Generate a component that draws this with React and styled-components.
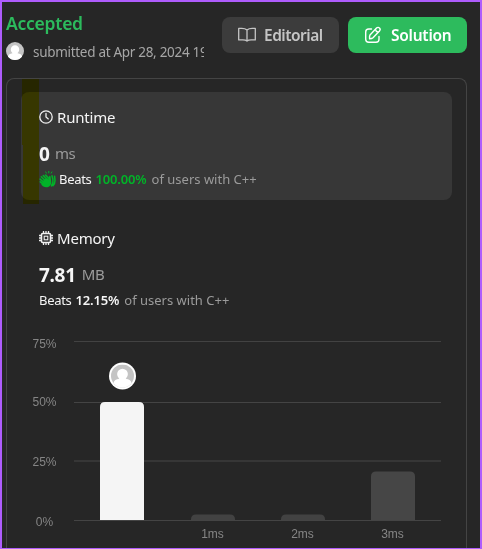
import React from "react";
import styled, { createGlobalStyle } from "styled-components";

const Global = createGlobalStyle`
  *, *::before, *::after { box-sizing: border-box; }
  body { margin: 0; background: #262626; }
`;

const Frame = styled.main`
  width: 482px;
  height: 549px;
  overflow: hidden;
  border: 2px solid #ae5cfc;
  border-bottom-width: 1px;
  background: #262626;
  color: #fff;
  font-family: "Noto Sans", "Open Sans", sans-serif;
  display: flex;
  flex-direction: column;
`;

const Header = styled.header`
  height: 76px;
  flex: none;
  padding: 0 13px 0 4px;
  display: flex;
  justify-content: space-between;
`;

const Status = styled.div`
  width: 198px;
  padding-top: 9px;
`;

const Text = styled.span`
  display: inline-block;
  flex: none;
  white-space: nowrap;
  color: ${(p) => p.$color || "#f5f5f5"};
  font-size: ${(p) => p.$size || 14}px;
  font-weight: ${(p) => p.$weight || 400};
  letter-spacing: ${(p) => p.$track || 0}px;
  line-height: ${(p) => p.$line || 20}px;
  margin-left: ${(p) => p.$gap || 0}px;
  padding-top: ${(p) => p.$drop || 0}px;
  padding-bottom: ${(p) => p.$lift || 0}px;
`;

const Submitted = styled.div`
  display: flex;
  align-items: center;
  height: 20px;
  margin-top: 6px;
  overflow: hidden;
`;

const Actions = styled.div`
  display: flex;
  gap: 9px;
  padding-top: 15px;
`;

const Button = styled.button`
  width: ${(p) => p.$width}px;
  height: 36px;
  border: 0;
  border-radius: 8px;
  padding: 0 0 0 16px;
  display: flex;
  align-items: center;
  font-family: inherit;
  color: ${(p) => p.$ink};
  background: ${(p) => p.$fill};
`;

const Card = styled.section`
  position: relative;
  flex: 1;
  width: 461px;
  margin-left: 4px;
  padding: 13px 14px 0;
  border: 1px solid #444;
  border-bottom: 0;
  border-radius: 8px 8px 0 0;
`;

const Metric = styled.div`
  height: 108px;
  padding: 15px 18px 0;
  border-radius: 8px;
  background: ${(p) => (p.$active ? "#373737" : "transparent")};
  margin-bottom: ${(p) => (p.$active ? 13 : 0)}px;
`;

const Row = styled.div`
  display: flex;
  align-items: center;
  height: ${(p) => p.$height}px;
  margin-top: ${(p) => p.$top || 0}px;
`;

const Highlighter = styled.div`
  position: absolute;
  top: 0;
  left: 15px;
  width: 17px;
  height: 125px;
  background: #ff0;
  mix-blend-mode: multiply;
  clip-path: polygon(0 0, 100% 0, 100% 100%, 1px 100%, 1px 66px, 0 66px);
`;

const Chart = styled.svg`
  display: block;
  margin: 14px 0 0 -14px;
  font-family: "Liberation Sans", Arial, sans-serif;
  font-size: 12px;
`;

const Avatar = styled.svg`
  flex: none;
`;

function Person({ size = 18 }) {
  return (
    <Avatar width={size} height={size} viewBox="0 0 18 18">
      <circle cx="9" cy="9" r="9" fill="#c4c4c4" />
      <path fill="#fff" d="M4.800 7.500a4.200 4.200 0 0 1 8.400 0c0 1.500-.7 2.600-1.600 3.400v.3c2.500.4 4 1.400 4.500 3.200A9 9 0 0 1 9 18a9 9 0 0 1-7.100-3.600c.6-1.800 2-2.800 4.500-3.200v-.3C5.500 10.100 4.800 9 4.800 7.500Z" />
    </Avatar>
  );
}

function Book() {
  return (
    <svg width="18" height="16" viewBox="0 0 18 16" fill="none" stroke="currentColor" strokeWidth="1.300" strokeLinejoin="round">
      <path d="M9 3C7.500 1.700 6 1.400 3.800 1.400H.7v11.500h4.100c1.800 0 3.100.2 4.200 1.200 1.100-1 2.400-1.200 4.200-1.200h4.100V1.400h-3.100C12 1.400 10.500 1.700 9 3Zm0 0v11" />
    </svg>
  );
}

function Compose() {
  return (
    <svg width="18" height="18" viewBox="0 0 18 18" fill="none" stroke="currentColor" strokeWidth="1.400" strokeLinecap="round" strokeLinejoin="round">
      <path d="M7.500 3H4.800C2.500 3 1.700 3.900 1.700 6v7.300c0 2 .8 3 3.100 3H12c2 0 3-1 3-3v-2.800" />
      <path d="m6 8.900 6.500-6.800c1-1 2.200-.9 3 0 .8.8.9 1.900 0 2.900L9 11.800c-.9.900-1.800 1-3.400 1-.2-1.600-.2-2.700.4-3.900ZM11.400 3.300c.3 1.700 1.200 2.600 2.900 2.900" />
    </svg>
  );
}

function Clock() {
  return (
    <svg width="14" height="14" viewBox="0 0 14 14" fill="none" stroke="#f0f0f0" strokeWidth="1.300" strokeLinecap="round">
      <circle cx="7" cy="7" r="6.200" />
      <path d="M7 3.400V7l2.300 1.900" />
    </svg>
  );
}

function Chip() {
  return (
    <svg width="14" height="14" viewBox="0 0 14 14" fill="none" stroke="#f0f0f0" strokeWidth="1.600">
      <rect x="2.500" y="2.500" width="9" height="9" rx="1.200" />
      <rect x="5.200" y="5.200" width="3.600" height="3.600" strokeWidth="1.100" />
      <path strokeWidth="1.300" d="M4.500 0v2M7 0v2M9.500 0v2M4.500 12v2M7 12v2M9.500 12v2M0 4.500h2M0 7h2M0 9.500h2M12 4.500h2M12 7h2M12 9.500h2" />
    </svg>
  );
}

function Clap() {
  return (
    <svg width="17" height="17" viewBox="0 0 17 17" fill="none" stroke="#01b328" strokeLinecap="round" strokeLinejoin="round">
      <path strokeWidth="1" d="m6.700.9.7 1.200M9.800.4v1.500M12.900.9l-.7 1.200" />
      <path strokeWidth="1.600" d="M4.300 4.500 8.500 9M2.300 5.800 7 10.500M1.200 8.100l4.500 4.300M1.300 10.800l3 2.700M6.600 4l3 3.300" />
      <path fill="#01b328" stroke="none" d="m5 8.300 3.400-.9 1.500 1.200V5.400c.2-1 1.500-1 1.700 0l.7 5.600c0 3.300-2.200 5.300-5 5.300-2.200 0-3.800-1-5-2.700Z" />
      <path strokeWidth="1.500" d="m13 4.800.9 3.400c.5 2.600-.1 4.800-1.500 6.700M15.600 5.300l.4 4.100c0 2.300-.7 3.900-2 5.200" />
    </svg>
  );
}

const bars = [
  { x: 93, top: 67, fill: "#f5f5f5" },
  { x: 184, top: 179.500, fill: "#424242", label: "1ms" },
  { x: 274, top: 179.500, fill: "#424242", label: "2ms" },
  { x: 364, top: 136.500, fill: "#464646", label: "3ms" },
];

const ticks = [
  { label: "75%", y: 6, text: 12.500, stroke: "#424242" },
  { label: "50%", y: 67, text: 71, stroke: "#444" },
  { label: "25%", y: 125, text: 131, stroke: "#363636", thick: 2 },
  { label: "0%", y: 185, text: 190.500, stroke: "#444" },
];

function Distribution() {
  return (
    <Chart width="459" height="208" viewBox="0 0 459 208">
      {ticks.map((t) => (
        <g key={t.label}>
          <rect x="67" y={t.y} width="367" height={t.thick || 1} fill={t.stroke} />
          <text x="37.500" y={t.text} textAnchor="middle" fill="#858585">{t.label}</text>
        </g>
      ))}
      {bars.map((b) => (
        <g key={b.x}>
          <path fill={b.fill} d={`M${b.x} 185V${b.top + 5}q0-5 5-5h34q5 0 5 5V185Z`} />
          {b.label && <text x={b.x + 21.500} y="203" textAnchor="middle" fill="#858585">{b.label}</text>}
        </g>
      ))}
      <circle cx="115.500" cy="41" r="13.500" fill="#fff" />
      <g transform="translate(104 29.500)"><Person size={23} /></g>
    </Chart>
  );
}

export default function App() {
  return (
    <>
      <Global />
      <Frame>
        <Header>
          <Status>
            <Text $size={17.500} $weight={600} $line={24} $track={-0.250} $color="#2cbb5d">Accepted</Text>
            <Submitted>
              <Person />
              <Text $size={13.500} $gap={9} $drop={2} $track={-0.300} $color="#a6a6a6">submitted at Apr 28, 2024 19</Text>
            </Submitted>
          </Status>
          <Actions>
            <Button $width={117} $ink="#c5c5c5" $fill="#3c3c3c">
              <Book />
              <Text $size={15.500} $weight={600} $gap={8} $track={-0.500} $color="#c5c5c5">Editorial</Text>
            </Button>
            <Button $width={119} $ink="#fff" $fill="#2dbb5d">
              <Compose />
              <Text $size={15.500} $weight={600} $gap={9} $track={-0.250} $color="#fff">Solution</Text>
            </Button>
          </Actions>
        </Header>
        <Card>
          <Metric $active>
            <Row $height={20}>
              <Clock />
              <Text $size={15} $gap={4} $track={-0.200}>Runtime</Text>
            </Row>
            <Row $height={24} $top={15}>
              <Text $size={19} $weight={700} $line={24}>0</Text>
              <Text $size={15} $gap={5} $lift={2} $track={-0.300} $color="#9b9b9b">ms</Text>
            </Row>
            <Row $height={20} $top={3}>
              <Clap />
              <Text $size={13} $gap={3} $track={-0.300}>Beats</Text>
              <Text $size={13} $weight={600} $gap={4} $track={-0.150} $color="#01b328">100.00%</Text>
              <Text $size={13} $gap={5} $color="#9b9b9b">of users with C++</Text>
            </Row>
          </Metric>
          <Metric>
            <Row $height={20}>
              <Chip />
              <Text $size={15} $gap={4} $track={-0.200}>Memory</Text>
            </Row>
            <Row $height={24} $top={15}>
              <Text $size={19} $weight={700} $line={24} $track={-0.300}>7.81</Text>
              <Text $size={15} $gap={6} $lift={2} $track={-0.300} $color="#9b9b9b">MB</Text>
            </Row>
            <Row $height={20} $top={3}>
              <Text $size={13} $track={-0.300}>Beats</Text>
              <Text $size={13} $weight={600} $gap={4} $track={-0.150}>12.15%</Text>
              <Text $size={13} $gap={5} $color="#9b9b9b">of users with C++</Text>
            </Row>
          </Metric>
          <Distribution />
          <Highlighter />
        </Card>
      </Frame>
    </>
  );
}
